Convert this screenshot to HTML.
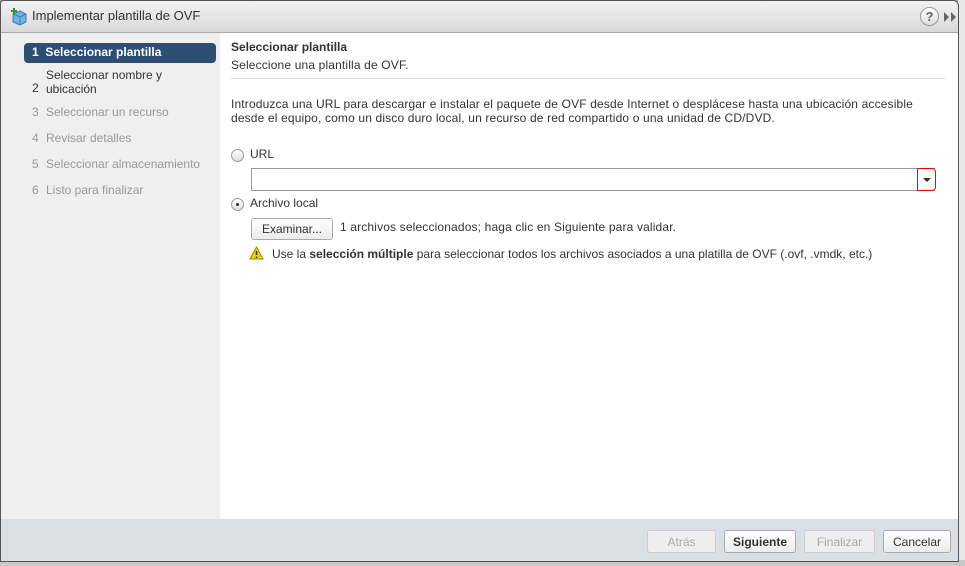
<!DOCTYPE html>
<html><head><meta charset="utf-8"><style>
*{box-sizing:border-box;margin:0;padding:0}
body{width:965px;height:566px;overflow:hidden;background:#9a9a9a;font-family:"Liberation Sans",sans-serif;font-size:12px;color:#333;position:relative}
.abs{position:absolute}
#bgr{left:958px;top:0;width:7px;height:566px;background:#e8e8e8}
#bgb{left:0;top:560px;width:965px;height:6px;background:#c8c8c8}
#dlg{left:0;top:0;width:959px;height:562px;background:#fff;border:1px solid #555;border-radius:4px 6px 0 0;overflow:hidden}
#title{left:0;top:0;width:958px;height:32px;background:linear-gradient(#f2f2f2,#d9d9d9);border-bottom:1px solid #aaa}
#title .t{left:31px;top:7px;font-size:13px;color:#333}
#side{left:0;top:32px;width:219px;height:486px;background:#efefef}
.st{position:absolute;left:31px;font-size:12px;color:#999}
.st b{font-weight:normal;display:inline-block;width:14px}
#sel{left:23px;top:42px;width:192px;height:20px;background:#2e4e74;border-radius:4px;color:#fff;font-weight:bold;padding:2px 0 0 8px}
#main{left:219px;top:32px;width:729px;height:486px;background:#fff}
#foot{left:0;top:518px;width:958px;height:44px;background:#dadee5}
.btn{position:absolute;top:529px;height:23px;border:1px solid #aaa;border-radius:3px;background:linear-gradient(#fff,#ececec);text-align:center;font-size:12px;padding-top:4px;color:#333}
.dis{color:#aaa;border-color:#ccc;background:#eee}
.radio{position:absolute;width:13px;height:13px;border:1px solid #999;border-radius:50%;background:linear-gradient(#fff,#ddd)}
.c{letter-spacing:0.15px}
</style></head><body>
<div class="abs" id="bgr"></div><div class="abs" id="bgb"></div>
<div class="abs" id="dlg">
 <div class="abs" id="title">
  <svg class="abs" style="left:9px;top:7px" width="18" height="18" viewBox="0 0 18 18"><path d="M3 6l7-3 6 3v8l-6 3-7-3z" fill="#6fb3e0" stroke="#3a7fb5"/><path d="M3 6l7 3 6-3M10 9v8" stroke="#3a7fb5" fill="none"/><path d="M4 0v6M1 3h6" stroke="#2a9a2a" stroke-width="2"/></svg>
  <div class="abs t">Implementar plantilla de OVF</div>
  <div class="abs" style="left:919px;top:6px;width:19px;height:19px;border:1px solid #999;border-radius:50%;background:linear-gradient(#fff,#ddd);font-weight:bold;font-size:13px;text-align:center;line-height:17px;color:#666">?</div>
  <svg class="abs" style="left:943px;top:11px" width="14" height="10" viewBox="0 0 14 10"><path d="M0 0l5 5-5 5zM7 0l5 5-5 5z" fill="#666"/></svg>
 </div>
 <div class="abs" id="side"></div>
 <div class="abs" id="sel">1&nbsp;&nbsp;Seleccionar plantilla</div>
 <div class="st" style="top:80px;color:#333">2</div>
 <div class="st" style="left:45px;top:67px;color:#333;line-height:14px">Seleccionar nombre y<br>ubicación</div>
 <div class="st" style="top:104px"><b>3</b>Seleccionar un recurso</div>
 <div class="st" style="top:130px"><b>4</b>Revisar detalles</div>
 <div class="st" style="top:156px"><b>5</b>Seleccionar almacenamiento</div>
 <div class="st" style="top:182px"><b>6</b>Listo para finalizar</div>
 <div class="abs" id="main"></div>
 <div class="abs" style="left:230px;top:39px;font-weight:bold;font-size:12px">Seleccionar plantilla</div>
 <div class="abs c" style="left:230px;top:57px">Seleccione una plantilla de OVF.</div>
 <div class="abs" style="left:230px;top:77px;width:714px;height:1px;background:#ddd"></div>
 <div class="abs c" style="left:230px;top:96px;line-height:14px">Introduzca una URL para descargar e instalar el paquete de OVF desde Internet o desplácese hasta una ubicación accesible<br>desde el equipo, como un disco duro local, un recurso de red compartido o una unidad de CD/DVD.</div>
 <div class="radio" style="left:230px;top:148px"></div>
 <div class="abs" style="left:249px;top:146px">URL</div>
 <div class="abs" style="left:250px;top:167px;width:684px;height:23px;border:1px solid #999;border-right:none;background:#fff"></div>
 <div class="abs" style="left:916px;top:167px;width:19px;height:23px;border:1px solid #e00;border-radius:0 4px 4px 0;background:#fff"><div style="margin:9px 0 0 5px;width:0;height:0;border-left:4px solid transparent;border-right:4px solid transparent;border-top:4px solid #333"></div></div>
 <div class="radio" style="left:230px;top:197px"><div style="width:3px;height:3px;background:#333;border-radius:50%;margin:4px 0 0 4px"></div></div>
 <div class="abs" style="left:249px;top:195px">Archivo local</div>
 <div class="btn" style="left:250px;top:217px;width:82px;height:22px;padding-top:3px">Examinar...</div>
 <div class="abs c" style="left:339px;top:219px">1 archivos seleccionados; haga clic en Siguiente para validar.</div>
 <svg class="abs" style="left:248px;top:245px" width="15" height="14" viewBox="0 0 15 14"><path d="M7.5 1L14 13H1z" fill="#f5d300" stroke="#a08000"/><path d="M7.5 5v4M7.5 10.5v1.5" stroke="#333" stroke-width="1.5"/></svg>
 <div class="abs" style="left:271px;top:246px">Use la <b>selección múltiple</b> para seleccionar todos los archivos asociados a una platilla de OVF (.ovf, .vmdk, etc.)</div>
 <div class="abs" id="foot"></div>
 <div class="btn dis" style="left:646px;width:69px">Atrás</div>
 <div class="btn" style="left:723px;width:72px;font-weight:bold">Siguiente</div>
 <div class="btn dis" style="left:803px;width:71px">Finalizar</div>
 <div class="btn" style="left:882px;width:68px">Cancelar</div>
</div>
</body></html>
